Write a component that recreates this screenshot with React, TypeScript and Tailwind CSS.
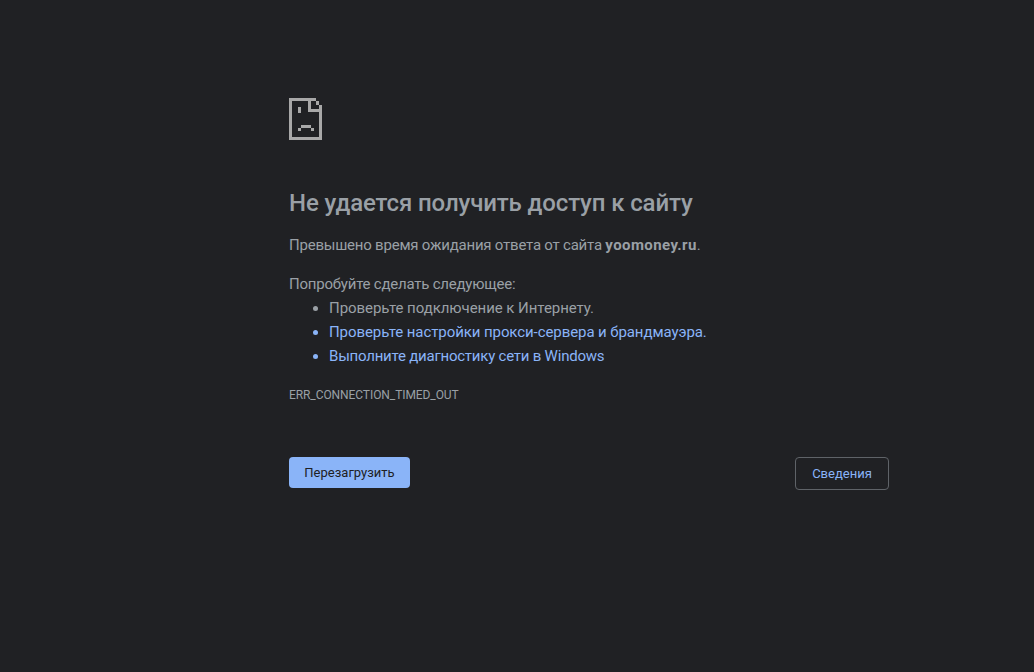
function SadPageIcon() {
  return (
    <svg width="33" height="42" viewBox="0 0 33 42" shapeRendering="crispEdges" fill="#a8a8a8">
      <rect x="0" y="0" width="27" height="3" />
      <rect x="0" y="0" width="3" height="42" />
      <rect x="0" y="39" width="33" height="3" />
      <rect x="30" y="7" width="3" height="35" />
      <rect x="27" y="3" width="3" height="4" />
      <rect x="19" y="3" width="3" height="11" />
      <rect x="19" y="11" width="11" height="3" />
      <rect x="9" y="9" width="3" height="6" />
      <rect x="12" y="27" width="10" height="3" />
      <rect x="9" y="30" width="3" height="3" />
      <rect x="22" y="30" width="3" height="3" />
    </svg>
  );
}

export default function App() {
  return (
    <div
      className="min-h-[672px] bg-[#202124] text-[15px] leading-6 tracking-[-0.08px] text-[#9aa0a6]"
      style={{ fontFamily: 'Roboto, "Open Sans", sans-serif' }}
    >
      <div className="ml-[289px] w-[600px] pt-[98px]">
        <SadPageIcon />
        <h1 className="mt-[45px] text-2xl leading-[36px] font-medium tracking-[-0.12px] text-[#9aa0a6]">
          Не удается получить доступ к сайту
        </h1>
        <p className="mt-[12px] tracking-[-0.22px]">
          Превышено время ожидания ответа от сайта <strong className="font-bold tracking-[0.4px]">yoomoney.ru</strong>.
        </p>
        <p className="mt-[15px] tracking-[-0.22px]">Попробуйте сделать следующее:</p>
        <ul className="list-disc pl-10">
          <li className="tracking-[-0.05px]">Проверьте подключение к Интернету.</li>
          <li className="text-[#8ab4f8]">Проверьте настройки прокси-сервера и брандмауэра.</li>
          <li className="text-[#8ab4f8] tracking-[-0.22px]">Выполните диагностику сети в Windows</li>
        </ul>
        <div className="mt-[15px] text-xs leading-6">ERR_CONNECTION_TIMED_OUT</div>
        <div className="mt-[50px] flex items-start justify-between">
          <button className="h-[31px] w-[121px] rounded bg-[#8ab4f8] text-[13px] tracking-normal text-[#202124]">
            Перезагрузить
          </button>
          <button className="h-[33px] w-[94px] rounded border border-[#5f6368] text-[13px] tracking-normal text-[#8ab4f8]">
            Сведения
          </button>
        </div>
      </div>
    </div>
  );
}
